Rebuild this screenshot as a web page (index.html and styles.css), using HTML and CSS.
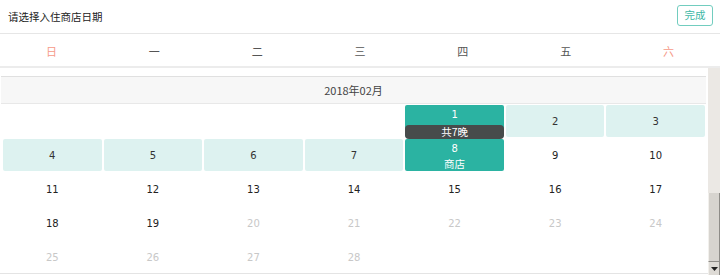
FILE: index.html
```html
<!DOCTYPE html>
<html lang="zh">
<head>
<meta charset="utf-8">
<link rel="stylesheet" href="styles.css">
</head>
<body>
<div class="header">
  <div class="title">请选择入住商店日期</div>
  <button class="done">完成</button>
</div>
<div class="weekdays">
  <div class="wd weekend">日</div>
  <div class="wd">一</div>
  <div class="wd">二</div>
  <div class="wd">三</div>
  <div class="wd">四</div>
  <div class="wd">五</div>
  <div class="wd weekend">六</div>
</div>
<div class="scroller">
  <div class="content">
    <div class="month">
      <div class="month-title">2018年02月</div>
      <div class="days">
        <div class="day empty"></div>
        <div class="day empty"></div>
        <div class="day empty"></div>
        <div class="day empty"></div>
        <div class="day start"><span class="num">1</span><span class="badge">共7晚</span></div>
        <div class="day range">2</div>
        <div class="day range">3</div>
        <div class="day range">4</div>
        <div class="day range">5</div>
        <div class="day range">6</div>
        <div class="day range">7</div>
        <div class="day end"><span class="num">8</span><span class="tag">商店</span></div>
        <div class="day">9</div>
        <div class="day">10</div>
        <div class="day">11</div>
        <div class="day">12</div>
        <div class="day">13</div>
        <div class="day">14</div>
        <div class="day">15</div>
        <div class="day">16</div>
        <div class="day">17</div>
        <div class="day">18</div>
        <div class="day">19</div>
        <div class="day off">20</div>
        <div class="day off">21</div>
        <div class="day off">22</div>
        <div class="day off">23</div>
        <div class="day off">24</div>
        <div class="day off">25</div>
        <div class="day off">26</div>
        <div class="day off">27</div>
        <div class="day off">28</div>
      </div>
    </div>
    <div class="next-month"></div>
  </div>
  <div class="scrollbar">
    <div class="track"></div>
    <div class="thumb"></div>
    <div class="arrow"><svg width="7" height="4" viewBox="0 0 7 4"><path d="M0 0H7L3.5 4Z" fill="#222"/></svg></div>
  </div>
</div>
</body>
</html>
```

FILE: styles.css
```css
html, body {
  margin: 0;
  padding: 0;
  background: #fff;
  overflow: hidden;
}
body {
  width: 720px;
  height: 275px;
  font-family: "Noto Sans CJK SC", "Noto Sans", sans-serif;
  color: #333;
}
.header {
  height: 33px;
  border-bottom: 1px solid #e6e6e6;
  display: flex;
  align-items: center;
  justify-content: space-between;
  padding: 0 7px 0 8px;
}
.title {
  font-size: 10.5px;
  color: #222;
  line-height: 1;
  padding-top: 1px;
}
.done {
  width: 36px;
  height: 21px;
  margin-bottom: 2px;
  padding: 0;
  border: 1px solid #72cdbf;
  border-radius: 3px;
  background: #fff;
  color: #3db8a6;
  font-family: "Noto Sans CJK SC", sans-serif;
  font-size: 10.5px;
  line-height: 1;
}
.weekdays {
  height: 32px;
  display: grid;
  grid-template-columns: repeat(7, 1fr);
  border-bottom: 2px solid #ececec;
}
.wd {
  display: flex;
  align-items: center;
  justify-content: center;
  font-size: 11px;
  color: #555;
  padding-top: 2px;
}
.wd.weekend {
  color: #f69a88;
}
.scroller {
  height: 207px;
  display: flex;
}
.content {
  flex: 1;
  overflow: hidden;
  padding-top: 8px;
}
.month-title {
  height: 26px;
  margin-left: 1px;
  margin-right: 2px;
  background: #f7f7f7;
  border-top: 1px solid #e0e0e0;
  border-bottom: 1px solid #e8e8e8;
  display: flex;
  align-items: center;
  justify-content: center;
  font-size: 11px;
  color: #444;
}
.days {
  display: grid;
  grid-template-columns: repeat(7, 1fr);
  grid-auto-rows: 34px;
  padding: 0 2px;
}
.day {
  margin: 1px;
  border-radius: 2px;
  display: flex;
  flex-direction: column;
  align-items: center;
  justify-content: center;
  font-family: "DejaVu Sans", sans-serif;
  font-size: 10px;
  color: #222;
}
.day.range {
  background: #ddf2f0;
  color: #333;
}
.day.off {
  color: #c8c8c8;
}
.day.start, .day.end {
  background: #2bb3a2;
  color: #fff;
  justify-content: flex-start;
}
.num {
  line-height: 12px;
  margin-top: 4px;
}
.badge {
  align-self: stretch;
  margin: 4px 0 0;
  height: 14px;
  border-radius: 4px;
  background: #474b4b;
  color: #fff;
  font-family: "Noto Sans CJK SC", sans-serif;
  font-size: 10.5px;
  line-height: 14px;
  text-align: center;
}
.tag {
  margin-top: 2px;
  font-family: "Noto Sans CJK SC", sans-serif;
  font-size: 10.5px;
  line-height: 13px;
}
.next-month {
  margin-top: -1px;
  border-top: 1px solid #e4e4e4;
}
.scrollbar {
  width: 12px;
  display: flex;
  flex-direction: column;
  background: #ebe8e4;
}
.track {
  flex: 1;
}
.thumb {
  height: 68px;
  background: #d7d4cf;
  border-left: 1px solid #f2f0ec;
  border-right: 1px solid #8e8c88;
  border-bottom: 1px solid #8e8c88;
}
.arrow {
  height: 13px;
  display: flex;
  align-items: center;
  justify-content: center;
  background: #dedbd6;
  border-right: 1px solid #8e8c88;
  border-left: 1px solid #f2f0ec;
}
```
